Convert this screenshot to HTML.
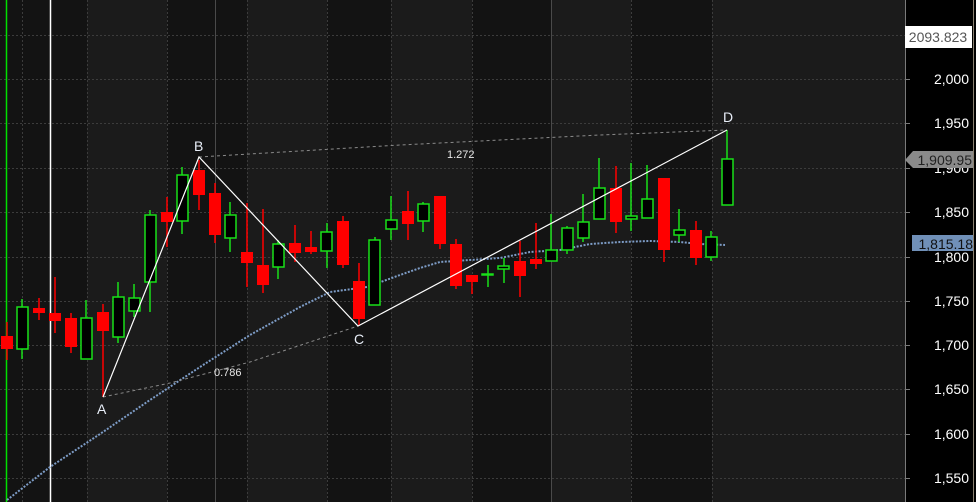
<!DOCTYPE html>
<html><head><meta charset="utf-8"><style>
html,body{margin:0;padding:0;background:#000;}
svg{display:block;font-family:"Liberation Sans",sans-serif;}
</style></head><body>
<svg width="976" height="502" viewBox="0 0 976 502" xmlns="http://www.w3.org/2000/svg">
<rect width="976" height="502" fill="#131313"/>
<rect x="87" y="0" width="80" height="502" fill="#1b1b1b"/>
<rect x="247" y="0" width="80" height="502" fill="#1b1b1b"/>
<rect x="391" y="0" width="81" height="502" fill="#1b1b1b"/>
<rect x="551" y="0" width="80" height="502" fill="#1b1b1b"/>
<rect x="712" y="0" width="193" height="502" fill="#1b1b1b"/>
<g stroke="#3c3c3c" stroke-dasharray="2,2" stroke-width="1">
<line x1="22.5" y1="0" x2="22.5" y2="502"/><line x1="87.5" y1="0" x2="87.5" y2="502"/>
<line x1="167.5" y1="0" x2="167.5" y2="502"/><line x1="247.5" y1="0" x2="247.5" y2="502"/>
<line x1="327.5" y1="0" x2="327.5" y2="502"/><line x1="391.5" y1="0" x2="391.5" y2="502"/>
<line x1="472.5" y1="0" x2="472.5" y2="502"/><line x1="631.5" y1="0" x2="631.5" y2="502"/>
<line x1="712.5" y1="0" x2="712.5" y2="502"/>
<line x1="0" y1="35.5" x2="905" y2="35.5"/><line x1="0" y1="79.5" x2="905" y2="79.5"/>
<line x1="0" y1="123.5" x2="905" y2="123.5"/><line x1="0" y1="168.5" x2="905" y2="168.5"/>
<line x1="0" y1="212.5" x2="905" y2="212.5"/><line x1="0" y1="257.5" x2="905" y2="257.5"/>
<line x1="0" y1="301.5" x2="905" y2="301.5"/><line x1="0" y1="345.5" x2="905" y2="345.5"/>
<line x1="0" y1="389.5" x2="905" y2="389.5"/><line x1="0" y1="434.5" x2="905" y2="434.5"/>
<line x1="0" y1="478.5" x2="905" y2="478.5"/>
</g>
<line x1="215.5" y1="0" x2="215.5" y2="502" stroke="#4a4a4a"/>
<line x1="551.5" y1="0" x2="551.5" y2="502" stroke="#4a4a4a"/>
<line x1="6.5" y1="0" x2="6.5" y2="502" stroke="#00e000" stroke-width="1.5"/>
<line x1="50.5" y1="0" x2="50.5" y2="502" stroke="#ffffff" stroke-width="1.5"/>
<!-- MA -->
<polyline fill="none" stroke="#7d9cc6" stroke-width="2" stroke-dasharray="2,1.5" points="7,500 50,467 100,434 150,400 200,367 250,335 300,307 330,292 367,287 400,275 420,268 440,262 470,260 500,258 530,252 560,250 590,244 620,242 650,241 680,242 700,244 725,245"/>
<!-- dashed fib lines -->
<polyline fill="none" stroke="#8a8a8a" stroke-dasharray="3,3" points="103,397 170,383 250,362 358,326"/>
<polyline fill="none" stroke="#8a8a8a" stroke-dasharray="3,3" points="199,157 400,145 600,135 727,130"/>
<!-- candles wicks -->
<g stroke-width="1.5">
<g stroke="#ff0000">
<line x1="7" y1="322" x2="7" y2="360"/><line x1="39" y1="298" x2="39" y2="320"/><line x1="55" y1="277" x2="55" y2="333"/>
<line x1="71" y1="313" x2="71" y2="353"/><line x1="103" y1="304" x2="103" y2="397"/><line x1="167" y1="197" x2="167" y2="247"/>
<line x1="199" y1="160" x2="199" y2="210"/><line x1="215" y1="183" x2="215" y2="243"/><line x1="247" y1="203" x2="247" y2="287"/>
<line x1="263" y1="209" x2="263" y2="293"/><line x1="295" y1="225" x2="295" y2="262"/><line x1="311" y1="231" x2="311" y2="254"/>
<line x1="343" y1="216" x2="343" y2="268"/><line x1="359" y1="263" x2="359" y2="326"/><line x1="408" y1="191" x2="408" y2="240"/>
<line x1="440" y1="196" x2="440" y2="249"/><line x1="456" y1="239" x2="456" y2="289"/><line x1="472" y1="275" x2="472" y2="294"/>
<line x1="520" y1="241" x2="520" y2="297"/><line x1="536" y1="223" x2="536" y2="269"/><line x1="616" y1="166" x2="616" y2="233"/>
<line x1="664" y1="178" x2="664" y2="262"/><line x1="696" y1="221" x2="696" y2="265"/>
</g>
<g stroke="#19e019">
<line x1="22" y1="299" x2="22" y2="359"/><line x1="86" y1="300" x2="86" y2="359"/><line x1="118" y1="282" x2="118" y2="343"/>
<line x1="134" y1="284" x2="134" y2="317"/><line x1="150" y1="210" x2="150" y2="312"/><line x1="182" y1="167" x2="182" y2="234"/>
<line x1="230" y1="202" x2="230" y2="252"/><line x1="278" y1="240" x2="278" y2="279"/><line x1="327" y1="223" x2="327" y2="268"/>
<line x1="375" y1="237" x2="375" y2="305"/><line x1="391" y1="196" x2="391" y2="240"/><line x1="423" y1="202" x2="423" y2="232"/>
<line x1="488" y1="265" x2="488" y2="287"/><line x1="504" y1="258" x2="504" y2="283"/><line x1="551" y1="214" x2="551" y2="261"/>
<line x1="567" y1="226" x2="567" y2="254"/><line x1="583" y1="194" x2="583" y2="242"/><line x1="599" y1="158" x2="599" y2="219"/>
<line x1="631" y1="163" x2="631" y2="231"/><line x1="647" y1="165" x2="647" y2="218"/><line x1="679" y1="209" x2="679" y2="242"/>
<line x1="711" y1="231" x2="711" y2="261"/><line x1="727" y1="130" x2="727" y2="205"/>
</g>
</g>
<g fill="#ff0000">
<rect x="1" y="336" width="12" height="13"/><rect x="33" y="308" width="12" height="5"/><rect x="49" y="313" width="12" height="8"/>
<rect x="65" y="318" width="12" height="29"/><rect x="97" y="312" width="12" height="19"/><rect x="161" y="212" width="12" height="10"/>
<rect x="193" y="170" width="12" height="25"/><rect x="209" y="193" width="12" height="42"/><rect x="241" y="252" width="12" height="11"/>
<rect x="257" y="265" width="12" height="20"/><rect x="289" y="243" width="12" height="10"/><rect x="305" y="247" width="12" height="5"/>
<rect x="337" y="221" width="12" height="44"/><rect x="353" y="281" width="12" height="38"/><rect x="402" y="211" width="12" height="13"/>
<rect x="434" y="196" width="12" height="48"/><rect x="450" y="244" width="12" height="42"/><rect x="466" y="275" width="12" height="7"/>
<rect x="514" y="261" width="12" height="15"/><rect x="530" y="259" width="12" height="5"/><rect x="610" y="188" width="12" height="34"/>
<rect x="658" y="178" width="12" height="72"/><rect x="690" y="230" width="12" height="28"/>
</g>
<g fill="#000" stroke="#19e019" stroke-width="1.5">
<rect x="17" y="307" width="11" height="42"/><rect x="81" y="318" width="11" height="41"/><rect x="113" y="297" width="11" height="40"/>
<rect x="129" y="298" width="11" height="13"/><rect x="145" y="215" width="11" height="67"/><rect x="177" y="175" width="11" height="46"/>
<rect x="225" y="215" width="11" height="23"/><rect x="273" y="244" width="11" height="23"/><rect x="321" y="232" width="11" height="19"/>
<rect x="369" y="240" width="11" height="65"/><rect x="386" y="220" width="11" height="9"/><rect x="418" y="204" width="11" height="17"/>
<rect x="482" y="274" width="11" height="1"/><rect x="498" y="266" width="11" height="3"/><rect x="546" y="250" width="11" height="11"/>
<rect x="562" y="228" width="11" height="22"/><rect x="578" y="222" width="11" height="16"/><rect x="594" y="188" width="11" height="31"/>
<rect x="626" y="216" width="11" height="3"/><rect x="642" y="199" width="11" height="19"/><rect x="674" y="230" width="11" height="5"/>
<rect x="706" y="237" width="11" height="20"/><rect x="722" y="159" width="11" height="46"/>
</g>
<polyline fill="none" stroke="#fff" stroke-width="1.2" points="103,397 199,157 358,326 727,130"/>
<g fill="#e8eef8" font-size="14">
<text x="97" y="414">A</text><text x="194" y="151">B</text><text x="354" y="344">C</text><text x="723" y="122">D</text>
</g>
<g fill="#e8e8e8" font-size="11">
<text x="214" y="376">0.786</text><text x="447" y="158">1.272</text>
</g>
<!-- axis -->
<rect x="905" y="0" width="71" height="502" fill="#000"/>
<line x1="905.5" y1="0" x2="905.5" y2="502" stroke="#7a7a7a"/>
<line x1="973.5" y1="0" x2="973.5" y2="502" stroke="#8a8070"/>
<g stroke="#7a7a7a"><line x1="905" y1="79.5" x2="910" y2="79.5"/><line x1="905" y1="123.5" x2="910" y2="123.5"/><line x1="905" y1="168.5" x2="910" y2="168.5"/><line x1="905" y1="212.5" x2="910" y2="212.5"/><line x1="905" y1="257.5" x2="910" y2="257.5"/><line x1="905" y1="301.5" x2="910" y2="301.5"/><line x1="905" y1="345.5" x2="910" y2="345.5"/><line x1="905" y1="389.5" x2="910" y2="389.5"/><line x1="905" y1="434.5" x2="910" y2="434.5"/><line x1="905" y1="478.5" x2="910" y2="478.5"/></g>
<g fill="#ffffff" font-size="14" text-anchor="end">
<text x="969" y="84">2,000</text><text x="969" y="128">1,950</text><text x="969" y="173">1,900</text><text x="969" y="217">1,850</text>
<text x="969" y="262">1,800</text><text x="969" y="306">1,750</text><text x="969" y="350">1,700</text><text x="969" y="394">1,650</text>
<text x="969" y="439">1,600</text><text x="969" y="483">1,550</text>
</g>
<rect x="905" y="26" width="67" height="22" fill="#fff"/>
<text x="938" y="42" fill="#555" font-size="14" text-anchor="middle">2093.823</text>
<polygon points="905,160 913,151 973,151 973,168 913,168" fill="#8a8a8a"/>
<text x="972" y="165" fill="#222" font-size="14" text-anchor="end">1,909.95</text>
<rect x="912" y="235" width="61" height="16" fill="#7090b8"/>
<text x="973" y="249" fill="#111" font-size="14" text-anchor="end">1,815.18</text>
</svg>
</body></html>
